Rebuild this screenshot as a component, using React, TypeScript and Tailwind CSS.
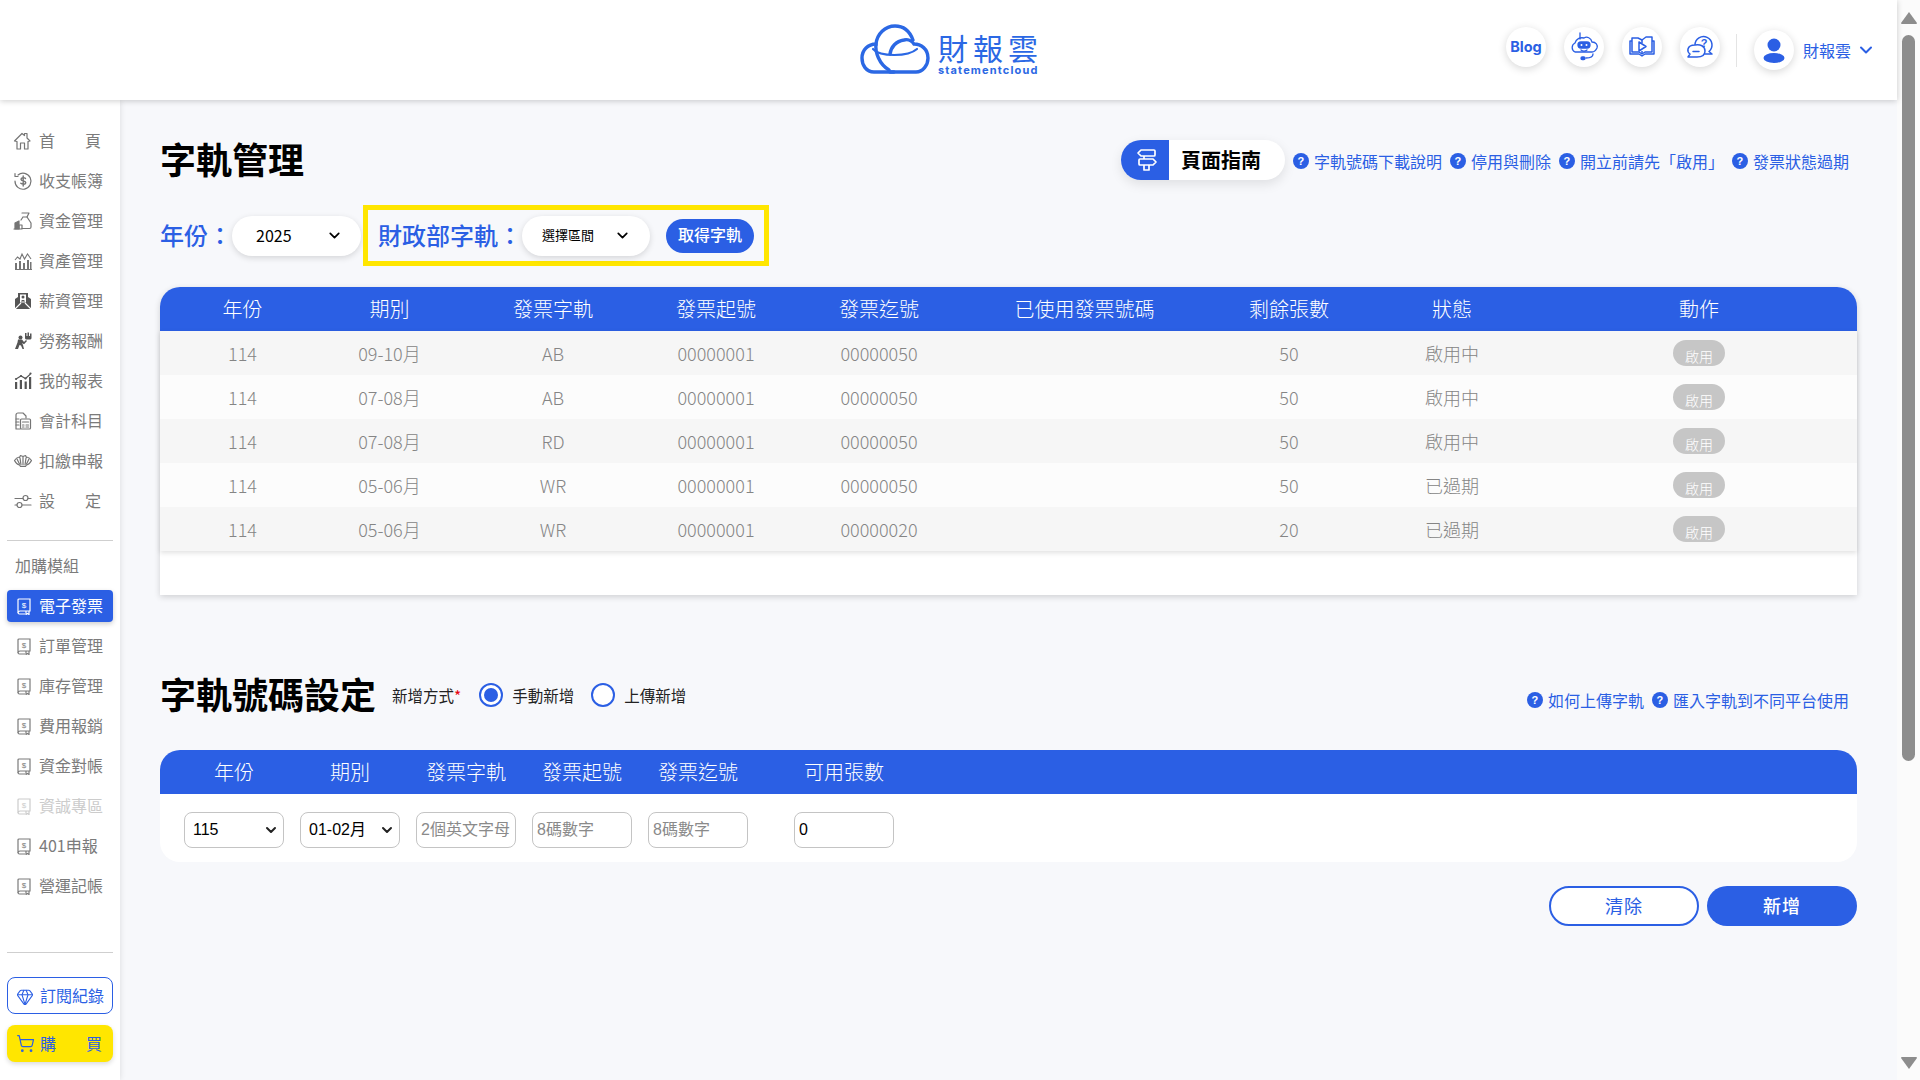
import React from "react";
import { ChevronDown, ShoppingCart, Gem } from "lucide-react";

const FONT = "font-['Noto_Sans_CJK_TC','Noto_Sans',sans-serif]";
const cols = "grid grid-cols-[115px_179px_148px_178px_148px_263px_146px_180px_314px] pl-[25px]";

const BookIcon = ({ c = "currentColor" }: { c?: string }) => (
  <svg width="14" height="17" viewBox="0 0 14 17" fill="none" stroke={c} strokeWidth="1.2">
    <path d="M2 1h11v12H3a2 2 0 0 0-2 2V2a1 1 0 0 1 1-1z" />
    <path d="M1 14.500a1.500 1.500 0 0 0 1.500 1.500H8M9 13v3.500l1.500-1 1.500 1V13" />
    <text x="7" y="9.500" fontSize="8" textAnchor="middle" fill={c} stroke="none" fontFamily="Liberation Sans">$</text>
  </svg>
);

const Ico = ({ children }: { children: React.ReactNode }) => (
  <svg width="20" height="20" viewBox="0 0 20 20" fill="none" stroke="currentColor" strokeWidth="1.2" strokeLinecap="round" strokeLinejoin="round">
    {children}
  </svg>
);

const topItems: [React.ReactNode, string][] = [
  [<Ico><path d="M1.500 10L9 2.500l2.500 2V2.500H14v4.500l3 3-2 .500V18h-3.500v-6h-4v6H4v-7.500z" /></Ico>, "首頁"],
  [<Ico><path d="M5 4a8 8 0 1 1-3 6" /><path d="M2 2.500v3h3" /><path d="M12.500 7.500c-1-1.200-4.500-1.200-4.500.800 0 2.400 4.800 1 4.800 3.400 0 1.800-3.400 2-5 .600M10.200 5v10" strokeWidth="1.400" /></Ico>, "收支帳簿"],
  [<Ico><path d="M9 2h7l-2 4 4 6v4a1.500 1.500 0 0 1-1.500 1.500H9" /><path d="M10 6h4M10 6l-2 3" /><path d="M2 18v-6l4-2v8z" fill="currentColor" /><path d="M6 18v-4h3v4M1 18h8" /></Ico>, "資金管理"],
  [<svg width="20" height="20" viewBox="0 0 20 20" fill="currentColor"><path d="M2 12h2v6H2zM6 10h2v8H6zM10 12h2v6h-2zM14 9h2v9h-2zM17 11h1.500v7H17z" /><path d="M2 18.500h17" stroke="currentColor" strokeWidth="1" /><path d="M2 9l2.500-3L7 8l2-5 2.500 5L14.500 3 18 8" fill="none" stroke="currentColor" strokeWidth="1.100" /></svg>, "資產管理"],
  [<svg width="20" height="20" viewBox="0 0 20 20" fill="#555"><path d="M2 8l3-2V2h10v4l3 2v10H2z" /><path d="M2 18l6-6M18 18l-6-6" stroke="#fff" strokeWidth="1.100" fill="none" /><rect x="7" y="3.500" width="6" height="8" fill="#fff" /><circle cx="10" cy="6" r="1.500" /><path d="M8 10.500c0-2 4-2 4 0z" /></svg>, "薪資管理"],
  [<svg width="20" height="20" viewBox="0 0 20 20" fill="#555"><circle cx="7.500" cy="6.500" r="2" /><path d="M2 18l2.500-6.500.5-3h4l2 2.500 2-2 1 1-3 3.200L9 12l1 2 1 4H9.500l-1.500-3.500L6.500 14l-1.500 4z" /><path d="M12 2h1.500v3h1V1.500H16V5h1V2.500h1.500V7c0 1-1 1.500-2 1.500h-2.500C13 8.500 12 8 12 7z" /></svg>, "勞務報酬"],
  [<svg width="20" height="20" viewBox="0 0 20 20" fill="#555"><path d="M2 11h2.200v7H2zM6.800 9h2.200v9H6.800zM11.600 10.500h2.200V18h-2.200zM16 6h2.200v12H16z" /><path d="M3 8l5-3 4.500 2.500L17.500 3" fill="none" stroke="#555" strokeWidth="1.100" /><circle cx="3" cy="8" r="1.100" /><circle cx="8" cy="5" r="1.100" /><circle cx="12.500" cy="7.500" r="1.100" /><circle cx="17.500" cy="2.500" r="1.100" /></svg>, "我的報表"],
  [<Ico><path d="M3 18V4a2 2 0 0 1 2-2h5l3 3v2M3 18h4" /><rect x="7.500" y="8" width="10" height="10" rx="1" /><path d="M9.500 11h6M9.500 14h1.500M13 14h2.500M9.500 16h1.500M13 16h2.500M3 8h3M3 11h3M3 14h3" /></Ico>, "會計科目"],
  [<Ico><path d="M1.500 9.500c2-3 4-3.500 5-3l1-2 2.500 1 2.500-1 1 2c1-.5 3 0 5 3-1.500 3-3 4-5 4.500l-1 1.500h-5l-1-1.500c-2-.5-3.500-1.500-5-4.500z" /><path d="M7 7l1 7M13 7l-1 7M10 6v8M4 8l2.500 5M16 8l-2.500 5" /></Ico>, "扣繳申報"],
  [<Ico><path d="M2 7.500h8M15 7.500h3M2 14h2M9 14h9" /><circle cx="12.500" cy="7" r="2.500" /><circle cx="6.500" cy="14" r="2.500" /></Ico>, "設定"],
];

const modules = ["電子發票", "訂單管理", "庫存管理", "費用報銷", "資金對帳", "資誠專區", "401申報", "營運記帳"];

const rows = [
  ["114", "09-10月", "AB", "00000001", "00000050", "", "50", "啟用中"],
  ["114", "07-08月", "AB", "00000001", "00000050", "", "50", "啟用中"],
  ["114", "07-08月", "RD", "00000001", "00000050", "", "50", "啟用中"],
  ["114", "05-06月", "WR", "00000001", "00000050", "", "50", "已過期"],
  ["114", "05-06月", "WR", "00000001", "00000020", "", "20", "已過期"],
];

const Spread = ({ text }: { text: string }) =>
  text.length === 2 ? (
    <span className="flex w-[62px] justify-between"><span>{text[0]}</span><span>{text[1]}</span></span>
  ) : (
    <span>{text}</span>
  );

const Help = ({ text }: { text: string }) => (
  <span className="flex items-center gap-[5px] text-base text-[#2b5fe4]">
    <span className="flex h-4 w-4 items-center justify-center rounded-full bg-[#2b5fe4] font-['Liberation_Sans'] text-[11px] font-bold leading-none text-white">?</span>
    <span>{text}</span>
  </span>
);

const RoundIcon = ({ children }: { children: React.ReactNode }) => (
  <div className="flex h-10 w-10 items-center justify-center rounded-full bg-white text-[#2b5fe4] shadow-[0_2px_8px_rgba(0,0,0,0.16)]">{children}</div>
);

function NativeField({ value, ph, sel }: { value?: string; ph?: string; sel?: boolean }) {
  return (
    <div className={`flex h-9 w-[100px] items-center justify-between rounded-lg border border-[#c4c4c4] bg-white ${sel ? "pl-2 pr-[4px]" : "pl-1 pr-1"} font-['Liberation_Sans','Noto_Sans_CJK_TC',sans-serif] text-base ${value ? "text-black" : "text-[#8a8a8a]"}`}>
      <span>{value ?? ph}</span>
      {sel && <ChevronDown size={16} strokeWidth={3} className="text-[#222]" />}
    </div>
  );
}

export default function App() {
  return (
    <div className={`flex h-screen w-screen overflow-hidden bg-[#f7f8fb] ${FONT}`}>
      <div className="flex h-full w-[1897px] flex-col">
        {/* Header */}
        <header className="relative z-20 flex h-[100px] shrink-0 items-center bg-white pl-[860px] shadow-[0_1px_6px_rgba(0,0,0,0.2)]">
          <div className="flex items-start gap-2 text-[#2b68e4]">
            <svg width="70" height="50" viewBox="0 0 70 50" fill="none" stroke="currentColor" strokeWidth="3.400" strokeLinecap="round">
              <path d="M34 48H14C6 48 2 41 2 34c0-8 6-14 14-14 1-10 9-18 19-18 9 0 15 6 18 14" />
              <path d="M30 48h26c7 0 12-7 12-14 0-9-7-14-14-14-2-3-6-5-10-4-8 1-13 7-14 14" />
              <path d="M13 25c7 8 35 8 44 0" strokeWidth="2.200" />
              <path d="M16 20c-1 8 3 20 13 26" />
            </svg>
            <div className="mt-[8px] flex flex-col">
              <span className="text-[30px] font-normal leading-[30px] tracking-[5px]">財報雲</span>
              <span className="mt-[3px] font-['Inter'] text-[11px] font-bold leading-[11px] tracking-[1.150px]">statementcloud</span>
            </div>
          </div>
          <div className="ml-auto mr-[21px] flex items-center">
            <div className="mb-[6px] flex items-center gap-[18px]">
              <RoundIcon><span className="font-['Inter'] text-[14.500px] font-bold">Blog</span></RoundIcon>
              <RoundIcon>
                <svg width="30" height="30" viewBox="0 0 30 30" fill="none" stroke="currentColor" strokeWidth="1.300" strokeLinecap="round">
                  <path d="M6 20a5 5 0 0 1 0-9c1-4 5-6 9-5 3-2 7 0 8 4 4 0 6 3 5 6-1 2-3 4-5 4z" />
                  <rect x="9" y="10" width="12" height="6" rx="3" fill="currentColor" />
                  <circle cx="12.500" cy="13" r="1" fill="#fff" stroke="none" /><circle cx="17.500" cy="13" r="1" fill="#fff" stroke="none" />
                  <path d="M12 18c2 1.500 4 1.500 6 0M11 1v6M24 22c0 3-3 4-7 4" />
                  <rect x="12" y="25" width="4" height="2.500" rx="1.200" fill="currentColor" />
                </svg>
              </RoundIcon>
              <RoundIcon>
                <svg width="26" height="24" viewBox="0 0 26 24" fill="none" stroke="currentColor" strokeWidth="1.500" strokeLinejoin="round">
                  <path d="M3 6H1v13h9l3 2 3-2h9V6h-2" /><path d="M3 17V3h6l4 2 4-3h6v15h-7l-3 2-3-2z" />
                  <path d="M13 5v3M13 16v3" /><path d="M10 7v9l7-4.500z" fill="#fff" />
                </svg>
              </RoundIcon>
              <RoundIcon>
                <svg width="28" height="28" viewBox="0 0 28 28" fill="none" stroke="currentColor" strokeWidth="1.500" strokeLinecap="round" strokeLinejoin="round">
                  <path d="M9 12a8.500 8.500 0 1 1 14 6.500l3 2.500h-7" />
                  <path d="M9 12c5-1 10 1 10 6s-4 6-8 6H2l2-3c-2-1.500-2.500-3-2-5 .5-2 3-4 7-4z" fill="#fff" />
                  <path d="M7 18.500h6" />
                  <text x="18" y="14" fontSize="11" fontWeight="700" textAnchor="middle" fill="currentColor" stroke="none" fontFamily="Liberation Sans">?</text>
                </svg>
              </RoundIcon>
            </div>
            <div className="ml-[16px] mr-[17px] h-[33px] w-px bg-[#e4e4e4]" />
            <RoundIcon>
              <svg width="24" height="26" viewBox="0 0 24 26" fill="currentColor"><circle cx="12" cy="8" r="6.500" /><ellipse cx="12" cy="21" rx="10.500" ry="5" /></svg>
            </RoundIcon>
            <div className="ml-[9px] flex items-center gap-[5px] text-base text-[#2b5fe4]">
              <span>財報雲</span>
              <ChevronDown size={20} strokeWidth={2.400} />
            </div>
          </div>
        </header>

        <div className="flex min-h-0 flex-1">
          {/* Sidebar */}
          <aside className="relative z-10 flex w-[120px] shrink-0 flex-col bg-white px-[7px] pt-[21px] text-base text-[#7b7b7b] shadow-[0_0_6px_rgba(0,0,0,0.12)]">
            {topItems.map(([icon, label]) => (
              <div key={label} className="flex h-10 items-center">
                <span className="ml-[6px] flex w-5 justify-center text-[#757575]">{icon}</span>
                <span className="ml-[6px] pb-[2px] leading-none"><Spread text={label} /></span>
              </div>
            ))}
            <div className="mt-[19px] h-px bg-[#cfcfcf]" />
            <div className="mt-[14px] flex h-5 items-center pl-[8px] leading-none">加購模組</div>
            <div className="mt-[15px] flex flex-col gap-2">
              {modules.map((m, i) => (
                <div
                  key={m}
                  className={`flex h-8 items-center rounded-[4px] ${i === 0 ? "bg-[#2b5fe4] text-white shadow-[0_2px_5px_rgba(0,0,0,0.2)]" : i === 5 ? "text-[#cccccc]" : "text-[#7b7b7b]"}`}
                >
                  <span className="ml-[10px] flex w-[14px] justify-center"><BookIcon /></span>
                  <span className="ml-[8px] pb-[2px] leading-none">{m}</span>
                </div>
              ))}
            </div>
            <div className="mt-[50px] h-px bg-[#cfcfcf]" />
            <div className="mt-[24px] flex h-[37px] items-center rounded-lg border border-[#2b5fe4] bg-white pl-2 text-[#2b5fe4]">
              <Gem size={18} strokeWidth={1.400} className="mt-[2px]" />
              <span className="ml-[6px] pb-[2px] leading-none">訂閱紀錄</span>
            </div>
            <div className="mt-[11px] flex h-[37px] items-center rounded-lg bg-[#ffe600] pl-[9px] text-[#2b5fe4] shadow-[0_2px_5px_rgba(0,0,0,0.15)]">
              <ShoppingCart size={19} strokeWidth={1.500} />
              <span className="ml-[5px] pb-[2px] leading-none"><Spread text="購買" /></span>
            </div>
          </aside>

          {/* Main */}
          <main className="min-w-0 flex-1 px-[40px] pt-[40px]">
            <div className="flex h-10 items-center">
              <h1 className="pb-[4px] text-[36px] font-bold leading-none text-black">字軌管理</h1>
              <div className="ml-auto mr-[8px] flex items-center">
                <div className="mr-2 flex h-10 w-[164px] items-center overflow-hidden rounded-full bg-white shadow-[0_4px_12px_rgba(0,0,0,0.1)]">
                  <div className="flex h-full w-12 items-center justify-center bg-[#2b5fe4] pl-1 text-white">
                    <svg width="22" height="24" viewBox="0 0 22 24" fill="none" stroke="currentColor" strokeWidth="1.700" strokeLinejoin="round">
                      <path d="M5 2h13a1 1 0 0 1 1 1v4a1 1 0 0 1-1 1H5L2 5z" />
                      <path d="M4 11h13l3 3-3 3H4a1 1 0 0 1-1-1v-4a1 1 0 0 1 1-1z" />
                      <path d="M8 8v3M8 17v5h5v-5" />
                    </svg>
                  </div>
                  <span className="ml-[12px] text-[20px] font-bold leading-none text-black">頁面指南</span>
                </div>
                <div className="flex items-center gap-2 pt-[2px]">
                  <Help text="字軌號碼下載說明" />
                  <Help text="停用與刪除" />
                  <Help text="開立前請先「啟用」" />
                  <Help text="發票狀態過期" />
                </div>
              </div>
            </div>

            <div className="mt-[25px] flex h-[61px] items-center">
              <span className="pb-[2px] text-2xl font-medium text-[#2b5fe4]">年份：</span>
              <div className="flex h-10 w-[129px] items-center justify-between rounded-full bg-white pb-[2px] pl-6 pr-[18px] text-base text-black shadow-[0_2px_6px_rgba(0,0,0,0.14)]">
                <span>2025</span>
                <ChevronDown size={17} strokeWidth={2.400} className="mt-[2px]" />
              </div>
              <div className="ml-[2px] flex h-[61px] w-[406px] items-center border-[5px] border-[#ffe600] pl-[10px]">
                <span className="pb-[2px] text-2xl font-medium text-[#2b5fe4]">財政部字軌：</span>
                <div className="flex h-10 w-[128px] items-center justify-between rounded-full bg-white pb-[2px] pl-5 pr-[19px] text-[13px] text-black shadow-[0_2px_6px_rgba(0,0,0,0.14)]">
                  <span>選擇區間</span>
                  <ChevronDown size={17} strokeWidth={2.400} className="mt-[2px]" />
                </div>
                <div className="ml-4 flex h-[34px] w-[88px] items-center justify-center rounded-full bg-[#2b5fe4] pb-[4px] text-base font-medium text-white">取得字軌</div>
              </div>
            </div>

            <section className="mt-[21px] h-[308px] rounded-t-[20px] bg-white shadow-[0_2px_6px_rgba(0,0,0,0.16)]">
              <div className={`${cols} h-11 items-center rounded-t-[20px] bg-[#2b5fe4] text-center text-[20px] font-light text-white`}>
                {["年份", "期別", "發票字軌", "發票起號", "發票迄號", "已使用發票號碼", "剩餘張數", "狀態", "動作"].map((h) => (
                  <div key={h}>{h}</div>
                ))}
              </div>
              <div className="shadow-[0_2px_5px_rgba(0,0,0,0.12)]">
                {rows.map((r, i) => (
                  <div key={i} className={`${cols} h-11 items-center text-center text-lg font-light text-[#858585] ${i % 2 === 0 ? "bg-[#f6f6f6]" : "bg-[#fcfcfc]"}`}>
                    {r.map((c, j) => (
                      <div key={j}>{c}</div>
                    ))}
                    <div className="flex justify-center">
                      <div className="h-[26px] w-[52px] rounded-full bg-[#c6c6c6] pt-[6px] text-center text-[14px] text-white">
                        <span className="block h-5 leading-[20px]">啟用</span>
                      </div>
                    </div>
                  </div>
                ))}
              </div>
            </section>

            <div className="mt-[70px] flex h-[60px] items-center">
              <h2 className="pb-[4px] text-[36px] font-bold leading-none text-black">字軌號碼設定</h2>
              <span className="ml-4 pt-[2px] text-[15.500px] text-[#222]">新增方式<span className="text-red-600">*</span></span>
              <span className="ml-[18px] flex h-6 w-6 items-center justify-center rounded-full border-2 border-[#2b5fe4] bg-white">
                <span className="h-[14px] w-[14px] rounded-full bg-[#2b5fe4]" />
              </span>
              <span className="ml-[9px] pt-[2px] text-[15.500px] text-[#222]">手動新增</span>
              <span className="ml-[17px] h-6 w-6 rounded-full border-2 border-[#2b5fe4] bg-white" />
              <span className="ml-[9px] pt-[2px] text-[15.500px] text-[#222]">上傳新增</span>
              <div className="ml-auto mr-[8px] mt-[10px] flex items-center gap-2">
                <Help text="如何上傳字軌" />
                <Help text="匯入字軌到不同平台使用" />
              </div>
            </div>

            <section className="mt-[25px] h-[112px] rounded-[20px] bg-white">
              <div className="flex h-11 items-center rounded-t-[20px] bg-[#2b5fe4] pl-[24px] text-center text-[20px] font-light text-white">
                {["年份", "期別", "發票字軌", "發票起號", "發票迄號"].map((h) => (
                  <div key={h} className="mr-4 w-[100px]">{h}</div>
                ))}
                <div className="ml-[30px] w-[100px]">可用張數</div>
              </div>
              <div className="flex items-start gap-4 pl-[24px] pt-[18px]">
                <NativeField value="115" sel />
                <NativeField value="01-02月" sel />
                <NativeField ph="2個英文字母" />
                <NativeField ph="8碼數字" />
                <NativeField ph="8碼數字" />
                <div className="ml-[30px]"><NativeField value="0" /></div>
              </div>
            </section>

            <div className="mt-6 flex justify-end gap-2">
              <div className="flex h-10 w-[150px] items-center justify-center rounded-full border-2 border-[#2b5fe4] bg-white pb-[2px] text-lg tracking-[1px] text-[#2b5fe4]">清除</div>
              <div className="flex h-10 w-[150px] items-center justify-center rounded-full bg-[#2b5fe4] pb-[2px] text-lg font-medium tracking-[1px] text-white">新增</div>
            </div>
          </main>
        </div>
      </div>

      {/* Scrollbar */}
      <div className="flex h-full w-[23px] flex-col items-center bg-[#fbfbfb] pt-[12px]">
        <svg width="16" height="12" viewBox="0 0 16 12" fill="#8d8d8d"><path d="M8 0l8 11a1 1 0 0 1-1 1H1a1 1 0 0 1-1-1z" /></svg>
        <div className="mt-[11px] h-[726px] w-[13px] rounded-full bg-[#8d8d8d]" />
        <div className="flex-1" />
        <svg className="mb-[11px]" width="16" height="12" viewBox="0 0 16 12" fill="#8d8d8d"><path d="M8 12L0 1a1 1 0 0 1 1-1h14a1 1 0 0 1 1 1z" /></svg>
      </div>
    </div>
  );
}
